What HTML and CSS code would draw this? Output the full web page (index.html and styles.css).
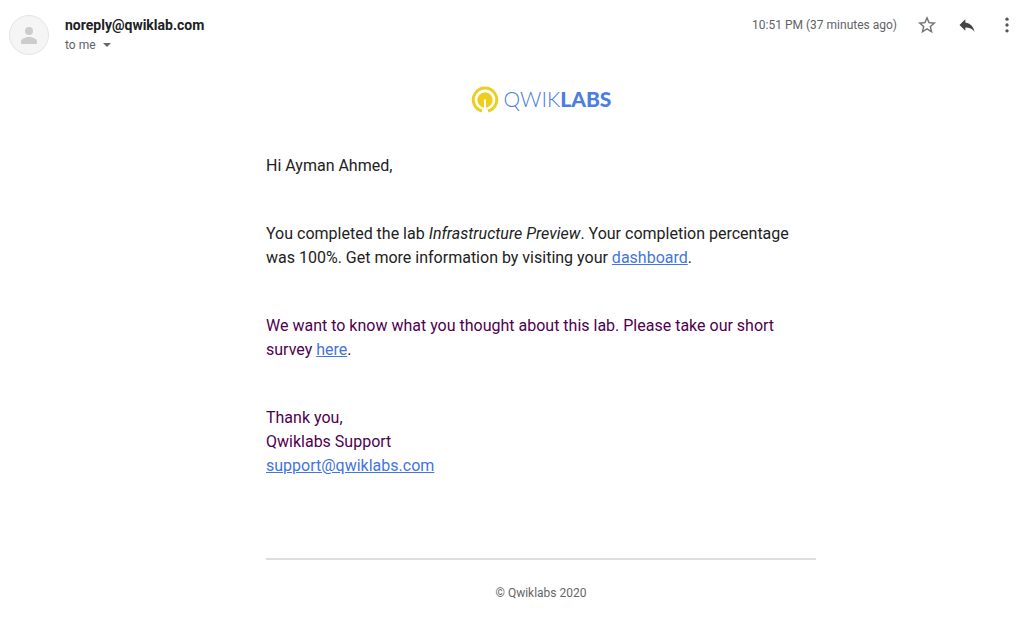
FILE: index.html
```html
<!DOCTYPE html>
<html lang="en">
<head>
<meta charset="utf-8">
<title>Qwiklabs message</title>
<link rel="stylesheet" href="styles.css">
</head>
<body>
<header class="message-header">
  <svg class="avatar" viewBox="0 0 40 40" role="img" aria-label="Sender">
    <circle cx="20" cy="20" r="19.5" fill="#f5f5f5" stroke="#e4e4e4"/>
    <circle cx="20" cy="16" r="4" fill="#ccc"/>
    <path d="M12 29v-2.500c0-3 5-4.500 8-4.500s8 1.500 8 4.500V29z" fill="#ccc"/>
  </svg>
  <div class="sender">
    <h1 class="sender-name">noreply@qwiklab.com</h1>
    <button class="recipient" type="button">to me
      <svg class="caret" viewBox="0 0 8 4" aria-hidden="true"><path d="M0 0h8L4 4z" fill="#666"/></svg>
    </button>
  </div>
  <time class="time">10:51 PM (37 minutes ago)</time>
  <div class="actions">
    <button class="action" type="button" aria-label="Star">
      <svg class="icon" viewBox="1 1 22 22"><path fill="#757575" d="M22 9.240l-7.190-.62L12 2 9.190 8.630 2 9.240l5.460 4.730L5.820 21 12 17.270 18.180 21l-1.630-7.030L22 9.240zM12 15.400l-3.760 2.270 1-4.280-3.320-2.880 4.380-.38L12 6.100l1.710 4.040 4.380.38-3.320 2.880 1 4.280L12 15.400z"/></svg>
    </button>
    <button class="action" type="button" aria-label="Reply">
      <svg class="icon" viewBox="0 0 24 24"><path fill="#444" d="M10 9V5l-7 7 7 7v-4.100c5 0 8.500 1.600 11 5.100-1-5-4-10-11-11z"/></svg>
    </button>
    <button class="action" type="button" aria-label="More">
      <svg class="icon" viewBox="0 0 24 24" fill="#555"><circle cx="12" cy="5" r="2"/><circle cx="12" cy="12" r="2"/><circle cx="12" cy="19" r="2"/></svg>
    </button>
  </div>
</header>
<main class="message">
  <div class="brand">
    <svg class="brand-mark" viewBox="0 0 28 28" aria-hidden="true">
      <path d="M11 25A11.700 11.700 0 1 1 17 25" fill="none" stroke="#edce1d" stroke-width="3"/>
      <path d="M10 20.600A7.700 7.700 0 1 1 18 20.600L15 22V13.500H13V22z" fill="#edce1d"/>
    </svg>
    <span class="brand-name">QWIK<b class="brand-strong">LABS</b></span>
  </div>
  <p class="paragraph">Hi Ayman Ahmed,</p>
  <p class="paragraph">You completed the lab <em>Infrastructure Preview</em>. Your completion percentage was 100%. Get more information by visiting your <a class="link" href="#dashboard">dashboard</a>.</p>
  <p class="paragraph quoted">We want to know what you thought about this lab. Please take our short survey <a class="link" href="#survey">here</a>.</p>
  <p class="paragraph quoted">Thank you,<br>Qwiklabs Support<br><a class="link" href="mailto:support@qwiklabs.com">support@qwiklabs.com</a></p>
  <footer class="footer">© Qwiklabs 2020</footer>
</main>
</body>
</html>
```
FILE: styles.css
```css
body {
  margin: 0;
  background: #fff;
  color: #222;
  font-family: Roboto, "Liberation Sans", sans-serif;
}

button {
  padding: 0;
  border: 0;
  background: none;
  font: inherit;
  color: inherit;
  cursor: pointer;
}

.message-header {
  display: flex;
  align-items: flex-start;
  padding: 15px 7px 0 9px;
  color: #5f6368;
}

.avatar {
  width: 40px;
  height: 40px;
  margin-right: 16px;
}

.sender {
  flex: 1;
}

.sender-name {
  margin: 0;
  color: #202124;
  font-size: 14px;
  line-height: 20px;
}

.recipient {
  display: flex;
  align-items: center;
  gap: 7px;
  font-size: 12px;
  line-height: 20px;
}

.caret {
  width: 8px;
  height: 4px;
}

.time {
  font-size: 12px;
  line-height: 20px;
}

.actions {
  display: flex;
  gap: 20px;
  margin-left: 20px;
}

.action,
.icon {
  display: block;
  width: 20px;
  height: 20px;
}

.message {
  max-width: 550px;
  margin: 0 auto;
  padding: 31px 8px 24px 66px;
  font-size: 16px;
  line-height: 24px;
}

.brand {
  display: flex;
  align-items: center;
  justify-content: center;
  gap: 5px;
  height: 28px;
  margin-bottom: 40px;
  color: #4d7de0;
}

.brand-mark {
  width: 28px;
  height: 28px;
}

.brand-name {
  padding-bottom: 2px;
  font-family: Lato, sans-serif;
  font-size: 21px;
  font-weight: 300;
}

.brand-strong {
  font-weight: 900;
}

.paragraph {
  margin: 0 0 44px;
}

.quoted {
  color: #500050;
}

.link {
  color: #4374e0;
}

.footer {
  margin-top: 80px;
  padding-top: 24px;
  border-top: 2px solid #dddde2;
  color: #666;
  font-size: 12px;
  line-height: 18px;
  text-align: center;
}
```
